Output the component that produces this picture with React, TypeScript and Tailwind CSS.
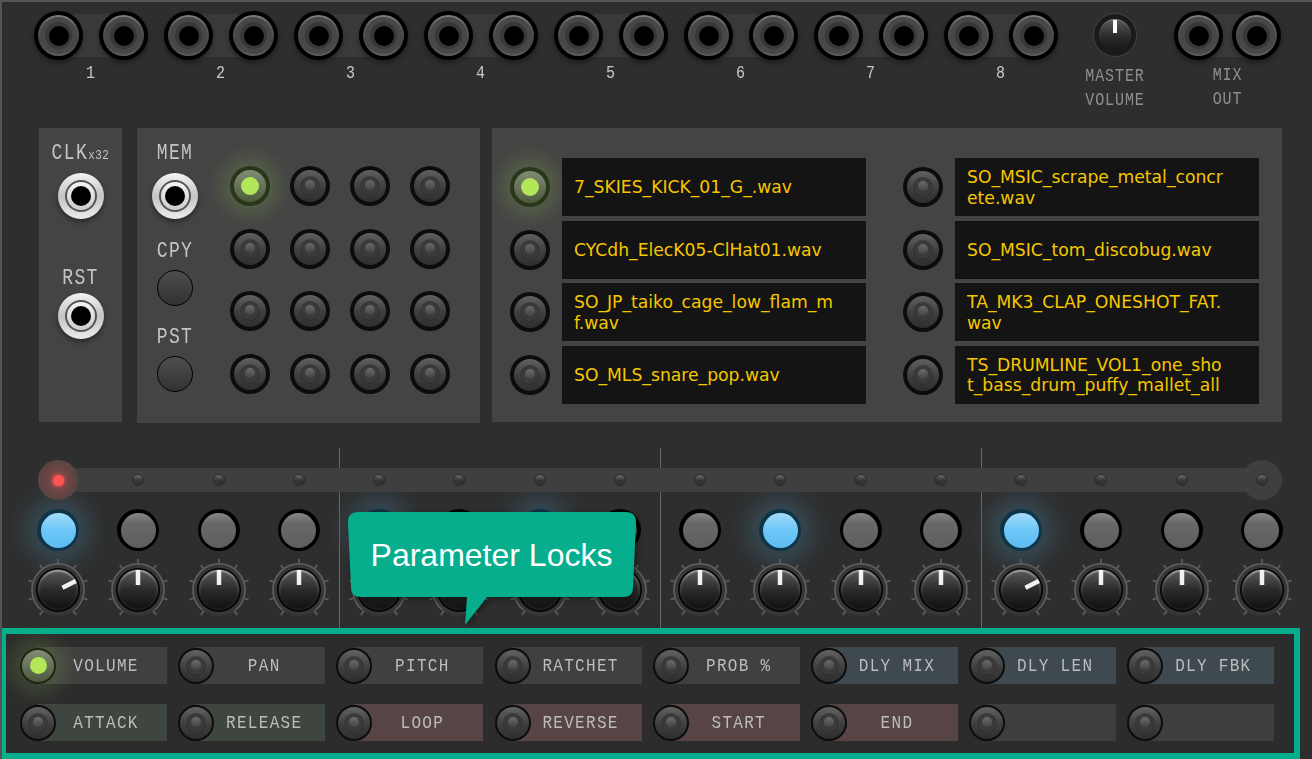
import React from "react";

const mono = "font-['Liberation_Mono',monospace]";

function Tall({ children, className = "" }: { children: React.ReactNode; className?: string }) {
  return <span className={`inline-block scale-y-[1.18] origin-center ${className}`}>{children}</span>;
}

function Jack() {
  return (
    <div className="relative z-10 w-[49px] h-[49px] shrink-0 rounded-full bg-black p-[4px] shadow-[0_3px_5px_rgba(0,0,0,0.35)]">
      <div className="w-full h-full rounded-full bg-[linear-gradient(#808080,#565656_30%,#474747_70%,#5e5e5e)] p-[2px]">
        <div className="w-full h-full rounded-full bg-[#474747] grid place-items-center">
          <div className="w-[27px] h-[27px] rounded-full bg-[#383838] grid place-items-center">
            <div className="w-[20px] h-[20px] rounded-full bg-black" />
          </div>
        </div>
      </div>
    </div>
  );
}

function JackPair({ gap }: { gap: string }) {
  return (
    <div className={`relative flex ${gap}`}>
      <div className="absolute left-[24px] right-[24px] top-[3px] h-[43px] bg-[#3a3a3a]" />
      <Jack />
      <Jack />
    </div>
  );
}

function WhiteJack() {
  return (
    <div className="w-[46px] h-[46px] rounded-full bg-[linear-gradient(#f4f4f4,#c4c4c4_50%,#ececec)] p-[7px] shadow-[0_3px_5px_rgba(0,0,0,0.4)]">
      <div className="w-full h-full rounded-full bg-[#555] p-[2px]">
        <div className="w-full h-full rounded-full bg-[linear-gradient(#f4f4f4,#cccccc)] p-[4px]">
          <div className="w-full h-full rounded-full bg-black" />
        </div>
      </div>
    </div>
  );
}

function Cap() {
  return (
    <div className="w-[18px] h-[18px] rounded-full bg-[#3a3a3a] shadow-[0_0_0_1px_rgba(45,45,45,0.6)] flex justify-center pt-[3px]">
      <div className="w-[10px] h-[10px] rounded-[5px] bg-[linear-gradient(#6a6a6a,#444444)]" />
    </div>
  );
}

function Led({ on = false }: { on?: boolean }) {
  return (
    <div
      className={`w-[40px] h-[40px] shrink-0 rounded-full p-[4px] ${
        on ? "bg-[#28361a] shadow-[0_0_20px_9px_rgba(165,215,90,0.2)]" : "bg-[#0c0c0c]"
      }`}
    >
      <div
        className={`w-full h-full rounded-full grid place-items-center ${
          on ? "bg-[linear-gradient(#808b74,#4d5a3e)]" : "bg-[linear-gradient(#606060,#3e3e3e_55%,#2e2e2e)]"
        }`}
      >
        {on ? <div className="w-[18px] h-[18px] rounded-full bg-[#b4e65a]" /> : <Cap />}
      </div>
    </div>
  );
}

function SmallLed({ on = false }: { on?: boolean }) {
  return (
    <div className={`relative z-10 w-[40px] h-[40px] rounded-full grid place-items-center ${on ? "bg-[radial-gradient(circle,#8a4a48,#5e4442_60%,#4c4846)]" : ""}`}>
      {on ? (
        <div className="w-[11px] h-[11px] rounded-full bg-[#ff5454] shadow-[0_0_4px_#ff5454]" />
      ) : (
        <div className="w-[12px] h-[12px] rounded-full border border-[#2a2a2a] bg-[linear-gradient(#6e6e6e,#383838_50%,#303030)]" />
      )}
    </div>
  );
}

function StepButton({ on = false }: { on?: boolean }) {
  return (
    <div
      className={`w-[42px] h-[42px] rounded-full p-[3.5px] ${
        on ? "bg-[#0f3448] shadow-[0_0_22px_12px_rgba(90,190,240,0.2)]" : "bg-black"
      }`}
    >
      <div
        className={`w-full h-full rounded-full ${
          on ? "bg-[linear-gradient(#a2dcfb,#6cc6f7_50%,#5cbcf0)]" : "bg-[linear-gradient(#858585,#686868_30%,#5e5e5e)]"
        }`}
      />
    </div>
  );
}

function Knob({ angle = 0 }: { angle?: number }) {
  const id = React.useId();
  const ticks = [-144, -108, -72, -36, 0, 36, 72, 108, 144];
  return (
    <svg width="64" height="64" viewBox="-32 -32 64 64">
      <defs>
        <linearGradient id={id} x1="0" y1="0" x2="0" y2="1">
          <stop offset="0" stopColor="#9a9a9a" />
          <stop offset="0.3" stopColor="#505050" />
          <stop offset="0.65" stopColor="#242424" />
          <stop offset="1" stopColor="#181818" />
        </linearGradient>
        <linearGradient id={`${id}b`} x1="0" y1="0" x2="0" y2="1">
          <stop offset="0" stopColor="#565656" />
          <stop offset="0.5" stopColor="#2a2a2a" />
          <stop offset="1" stopColor="#121212" />
        </linearGradient>
      </defs>
      <circle r="26" fill="#363636" />
      <path d="M -16.7 19.9 A 26 26 0 1 1 16.7 19.9" fill="none" stroke="#5c5c5c" strokeWidth="1.8" />
      {ticks.map((t) => (
        <line key={t} x1="0" y1="-25.5" x2="0" y2="-31" stroke="#5c5c5c" strokeWidth="1.8" transform={`rotate(${t})`} />
      ))}
      <circle r="22" fill="#000" />
      <circle r="20.5" fill={`url(#${id})`} />
      <circle r="18" fill={`url(#${id}b)`} />
      <line x1="0" y1="-5" x2="0" y2="-20" stroke="#f2f2f2" strokeWidth="4.5" transform={`rotate(${angle})`} />
    </svg>
  );
}

function MasterKnob() {
  return (
    <div className="w-[44px] h-[44px] rounded-full bg-[#1a1a1a] border border-[#444] p-[5px]">
      <div className="relative w-full h-full rounded-full bg-[linear-gradient(#8a8a8a,#484848_30%,#222_75%,#1a1a1a)] p-[1px]">
        <div className="w-full h-full rounded-full bg-[linear-gradient(#5a5a5a,#2e2e2e_50%,#161616)] flex justify-center">
          <div className="w-[4px] h-[13px] bg-white" />
        </div>
      </div>
    </div>
  );
}

function ParamLabel({ label, tone }: { label: string; tone: string }) {
  return (
    <div className={`-ml-[18px] w-[129px] h-[37px] pl-[7px] flex items-center justify-center text-[16px] tracking-[1.3px] text-[#bcbcbc] ${mono} ${tone}`}>
      <Tall className="mt-[1px]">{label}</Tall>
    </div>
  );
}

function Param({ label, tone }: { label: string; tone: string }) {
  return (
    <div className="flex w-[147px] h-[37px] items-center">
      <div className="relative z-10 w-[36px] h-[36px] shrink-0 rounded-full bg-[#0c0c0c] p-[2px]">
        <div className="w-full h-full rounded-full bg-[linear-gradient(#626262,#3e3e3e_55%,#2e2e2e)] grid place-items-center">
          <Cap />
        </div>
      </div>
      <ParamLabel label={label} tone={tone} />
    </div>
  );
}

function ParamOn({ label }: { label: string }) {
  return (
    <div className="flex w-[147px] h-[37px] items-center">
      <div className="relative z-10 w-[36px] h-[36px] shrink-0 rounded-full bg-[#1c2612] p-[2px] shadow-[0_0_20px_9px_rgba(165,215,90,0.18)]">
        <div className="w-full h-full rounded-full bg-[linear-gradient(#828c76,#4d5a3e)] grid place-items-center">
          <div className="w-[17px] h-[17px] rounded-full bg-[#b4e65a]" />
        </div>
      </div>
      <ParamLabel label={label} tone="bg-[#404040]" />
    </div>
  );
}

function FileRow({ name, on = false }: { name: string; on?: boolean }) {
  return (
    <div className="flex items-center gap-[12px]">
      <Led on={on} />
      <div className="w-[304px] h-[58px] bg-[#141414] pl-[12px] pr-[31px] flex items-center text-[17.2px] leading-[20.5px] text-[#f6c700] break-all font-['DejaVu_Sans',sans-serif]">
        <span className="mt-[1px]">{name}</span>
      </div>
    </div>
  );
}

function SideLabel({ children }: { children: React.ReactNode }) {
  return (
    <div className={`h-[20px] text-[18px] leading-[20px] tracking-[1.4px] text-[#c4c4c4] text-center whitespace-nowrap ${mono}`}>
      <Tall className="mt-[1px]">{children}</Tall>
    </div>
  );
}

const files = [
  ["7_SKIES_KICK_01_G_.wav", "SO_MSIC_scrape_metal_concrete.wav"],
  ["CYCdh_ElecK05-ClHat01.wav", "SO_MSIC_tom_discobug.wav"],
  ["SO_JP_taiko_cage_low_flam_mf.wav", "TA_MK3_CLAP_ONESHOT_FAT.wav"],
  ["SO_MLS_snare_pop.wav", "TS_DRUMLINE_VOL1_one_shot_bass_drum_puffy_mallet_all"],
];

const activeSteps = [0, 4, 6, 9, 12];
const lockedKnobs = [0, 12];
const steps = Array.from({ length: 16 }, (_, i) => i);

export default function App() {
  return (
    <div className="relative w-[1312px] h-[759px] overflow-hidden box-border border-t-2 border-l-2 border-[#555] bg-[#2e2e2e]">
      {/* top jacks */}
      <div className="h-[126px] pt-[9px] pl-[32px] flex">
        <div className="w-[1024px]">
          <div className="flex gap-[16px]">
            {[0, 1, 2, 3, 4, 5, 6, 7].map((i) => (
              <JackPair key={i} gap="gap-[16px]" />
            ))}
          </div>
          <div className={`flex gap-[16px] mt-[4px] text-[15px] leading-[20px] text-[#c8c8c8] ${mono}`}>
            {["1", "2", "3", "4", "5", "6", "7", "8"].map((n) => (
              <div key={n} className="w-[114px] text-center pr-[1px]">
                <Tall>{n}</Tall>
              </div>
            ))}
          </div>
        </div>
        <div className="ml-[23px] w-[68px] flex flex-col items-center">
          <div className="mt-[2px]">
            <MasterKnob />
          </div>
          <div className={`mt-[8px] text-center text-[15px] leading-[24px] tracking-[0.9px] text-[#8f8f8f] ${mono}`}>
            <Tall>MASTER</Tall>
            <br />
            <Tall>VOLUME</Tall>
          </div>
        </div>
        <div className="ml-[25px] w-[107px] flex flex-col items-center">
          <JackPair gap="gap-[9px]" />
          <div className={`mt-[4px] text-center text-[15px] leading-[24px] tracking-[0.9px] text-[#8f8f8f] ${mono}`}>
            <Tall>MIX</Tall>
            <br />
            <Tall>OUT</Tall>
          </div>
        </div>
      </div>

      {/* panels */}
      <div className="h-[295px] ml-[37px] flex">
        <div className="w-[83px] h-[294px] bg-[#444] pt-[14px] flex flex-col items-center">
          <SideLabel>
            CLK<span className="text-[11px] tracking-[0.5px]">x32</span>
          </SideLabel>
          <div className="mt-[11px]">
            <WhiteJack />
          </div>
          <div className="mt-[48px]">
            <SideLabel>RST</SideLabel>
          </div>
          <div className="mt-[6px]">
            <WhiteJack />
          </div>
        </div>
        <div className="ml-[15px] w-[343px] bg-[#444] flex">
          <div className="w-[76px] pt-[14px] flex flex-col items-center">
            <SideLabel>MEM</SideLabel>
            <div className="mt-[11px]">
              <WhiteJack />
            </div>
            <div className="mt-[21px]">
              <SideLabel>CPY</SideLabel>
            </div>
            <div className="mt-[10px] w-[36px] h-[36px] rounded-full border-[1.5px] border-black bg-[linear-gradient(#4e4e4e,#323232)]" />
            <div className="mt-[20px]">
              <SideLabel>PST</SideLabel>
            </div>
            <div className="mt-[10px] w-[36px] h-[36px] rounded-full border-[1.5px] border-black bg-[linear-gradient(#4e4e4e,#323232)]" />
          </div>
          <div className="ml-[17px] pt-[38px] grid grid-cols-4 gap-x-[20px] gap-y-[22.67px] content-start">
            {Array.from({ length: 16 }, (_, i) => (
              <Led key={i} on={i === 0} />
            ))}
          </div>
        </div>
        <div className="ml-[12px] w-[790px] h-[294px] bg-[#444] pt-[30px] pl-[18px] grid grid-cols-[356px_356px] gap-x-[37px] gap-y-[4.67px] content-start">
          {files.map(([a, b], i) => (
            <React.Fragment key={a}>
              <FileRow name={a} on={i === 0} />
              <FileRow name={b} />
            </React.Fragment>
          ))}
        </div>
      </div>

      {/* sequencer */}
      <div className="relative h-[205px] pl-[16px] pt-[37px]">
        <div className="absolute left-[337px] top-[25px] bottom-0 w-px bg-[#666]" />
        <div className="absolute left-[658px] top-[25px] bottom-0 w-px bg-[#666]" />
        <div className="absolute left-[979px] top-[25px] bottom-0 w-px bg-[#666]" />
        <div className="relative w-[1284px] h-[40px] grid grid-cols-[repeat(16,minmax(0,1fr))] justify-items-center">
          <div className="absolute left-[40px] right-[40px] top-[8px] h-[24px] bg-[#3f3f3f]" />
          <div className="absolute right-[20px] top-0 w-[40px] h-[40px] rounded-full bg-[#3f3f3f]" />
          {steps.map((i) => (
            <SmallLed key={i} on={i === 0} />
          ))}
        </div>
        <div className="w-[1284px] mt-[9px] grid grid-cols-[repeat(16,minmax(0,1fr))] justify-items-center">
          {steps.map((i) => (
            <StepButton key={i} on={activeSteps.includes(i)} />
          ))}
        </div>
        <div className="w-[1284px] mt-[7px] grid grid-cols-[repeat(16,minmax(0,1fr))] justify-items-center">
          {steps.map((i) => (
            <Knob key={i} angle={lockedKnobs.includes(i) ? 63 : 0} />
          ))}
        </div>
      </div>

      {/* parameter locks */}
      <div className="-ml-[2px] w-[1300px] h-[131px] box-border border-[6px] border-[#06ae8e] bg-[#2c2c2c] pl-[14px] pt-[13px]">
        <div className="grid grid-cols-[repeat(8,147px)] gap-x-[11.2px] gap-y-[20px]">
          <ParamOn label="VOLUME" />
          <Param label="PAN" tone="bg-[#404040]" />
          <Param label="PITCH" tone="bg-[#404040]" />
          <Param label="RATCHET" tone="bg-[#404040]" />
          <Param label="PROB %" tone="bg-[#404040]" />
          <Param label="DLY MIX" tone="bg-[#3e4a50]" />
          <Param label="DLY LEN" tone="bg-[#3e4a50]" />
          <Param label="DLY FBK" tone="bg-[#3e4a50]" />
          <Param label="ATTACK" tone="bg-[#3f4640]" />
          <Param label="RELEASE" tone="bg-[#3f4640]" />
          <Param label="LOOP" tone="bg-[#574545]" />
          <Param label="REVERSE" tone="bg-[#574545]" />
          <Param label="START" tone="bg-[#574545]" />
          <Param label="END" tone="bg-[#574545]" />
          <Param label="" tone="bg-[#3e3e3e]" />
          <Param label="" tone="bg-[#3e3e3e]" />
        </div>
      </div>

      {/* callout */}
      <div className="absolute z-20 left-[346px] top-[510px] w-[290px] h-[115px]">
        <svg width="290" height="115" viewBox="0 0 290 115" className="absolute inset-0 drop-shadow-[2px_2px_3px_rgba(0,0,0,0.45)]">
          <path d="M10,0 H278 Q288,0 288,10 L285,76 Q285,85 275,85 H139 L117,113 L119,85 H13 Q3,85 3,76 L0,10 Q0,0 10,0 Z" fill="#06ae8e" />
        </svg>
        <div className="relative h-[85px] w-[287px] flex items-center justify-center text-[32px] text-white font-['Liberation_Sans',sans-serif]">
          Parameter Locks
        </div>
      </div>
    </div>
  );
}
